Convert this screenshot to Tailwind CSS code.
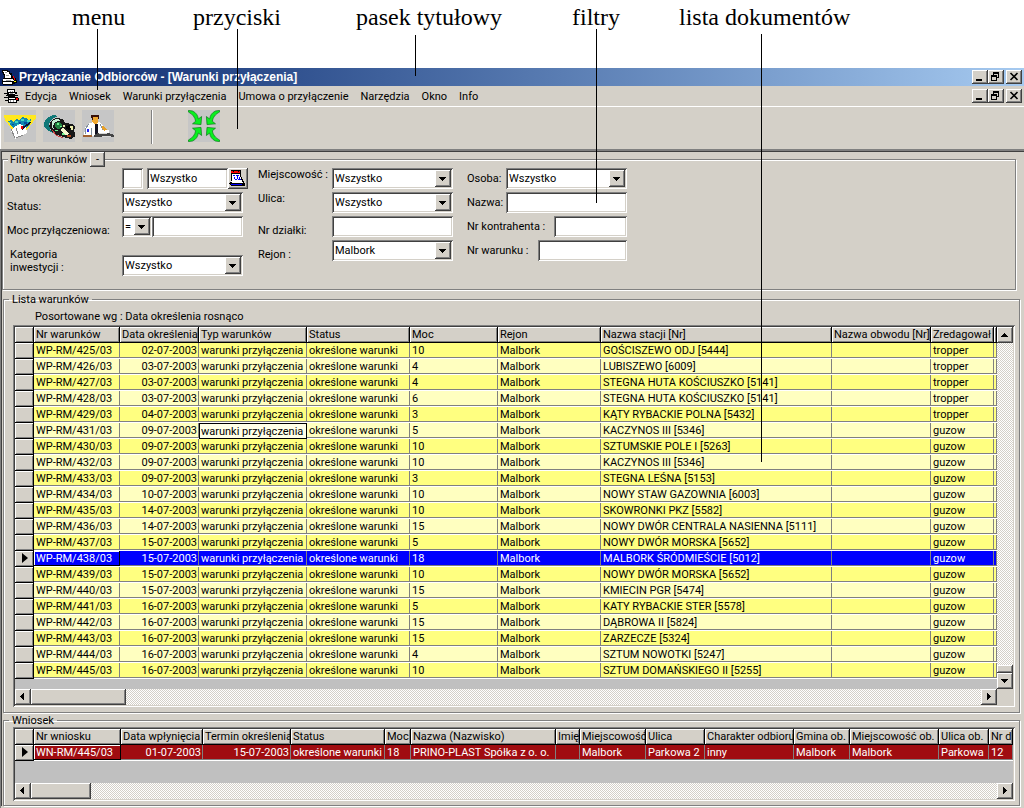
<!DOCTYPE html>
<html lang="pl">

<head>
  <meta charset="UTF-8">
  <title>Przyłączanie Odbiorców - [Warunki przyłączenia]</title>
  <script src="https://cdn.jsdelivr.net/npm/@tailwindcss/browser@4"></script>
</head>

<body class="bg-[#d4d0c8] font-[Roboto,'Liberation_Sans',Arial,sans-serif] text-[11px] leading-[13px] text-black overflow-x-hidden">

  <!-- opisy ekranu -->
  <header class="relative z-10 flex h-[68px] items-start bg-white pt-1 pl-[72px] font-['Liberation_Serif',serif] text-2xl leading-[26px] whitespace-nowrap">
    <p class="relative w-[121px]">menu<i class="absolute left-[25px] top-[25px] h-[61px] w-px bg-black"></i></p>
    <p class="relative w-[163px]">przyciski<i class="absolute left-[44px] top-[25px] h-[100px] w-px bg-black"></i></p>
    <p class="relative w-[216px]">pasek tytułowy<i class="absolute left-[59px] top-[31px] h-[41px] w-px bg-black"></i></p>
    <p class="relative w-[107px]">filtry<i class="absolute left-[24px] top-[25px] h-[174px] w-px bg-black"></i></p>
    <p class="relative">lista dokumentów<i class="absolute left-[82px] top-[30px] h-[428px] w-px bg-black"></i></p>
  </header>

  <!-- pasek tytułowy -->
  <div class="flex h-[18px] items-center bg-linear-to-r from-[#0a246a] to-[#a6caf0] pl-px pr-0.5">
    <svg class="size-4" viewBox="0 0 16 16" shape-rendering="crispEdges">
      <path d="M1 1h6v1h2v2h2v3h2v2h2v2h1v3h-2v1h-2v1H2v-1H1v-4h1v-2h1V6H2V4H1z" fill="#000" />
      <path d="M2 2h4v1h2v2H3V3H2zM4 5h5v1h1v3H4zM2 10h10v1h1v1H2zM2 13h9v2H2z" fill="#fff" />
      <path d="M4 3h2v1H4zM5 6h3v1H5zM5 11h5v1H5z" fill="#a0a0a0" />
      <path d="M12 7h1v2h-1zM13 9h1v2h-1z" fill="#f00" />
      <path d="M13 12h2v1h-2z" fill="#ff0" />
    </svg>
    <h1 class="ml-0.5 flex-1 font-['Liberation_Sans',Arial,sans-serif] text-xs font-bold text-white">Przyłączanie Odbiorców - [Warunki przyłączenia]</h1>
    <div class="flex">
      <button aria-label="Minimalizuj" class="h-3.5 w-4 bg-[#d4d0c8] shadow-[inset_-1px_-1px_#404040,inset_1px_1px_#fff,inset_-2px_-2px_#808080]">
        <svg class="h-3.5 w-4" viewBox="0 0 16 14"><path d="M4 9h6v2H4z" /></svg>
      </button>
      <button aria-label="Przywróć" class="h-3.5 w-4 bg-[#d4d0c8] shadow-[inset_-1px_-1px_#404040,inset_1px_1px_#fff,inset_-2px_-2px_#808080]">
        <svg class="h-3.5 w-4" viewBox="0 0 16 14" shape-rendering="crispEdges"><path fill-rule="evenodd" d="M5 2h6v6H9v3H3V5h2zM6 4v1h3v2h1V4zM4 7v3h4V7z" /></svg>
      </button>
      <button aria-label="Zamknij" class="ml-0.5 h-3.5 w-4 bg-[#d4d0c8] shadow-[inset_-1px_-1px_#404040,inset_1px_1px_#fff,inset_-2px_-2px_#808080]">
        <svg class="h-3.5 w-4" viewBox="0 0 16 14"><path d="M4.500 3l7 7M11.500 3l-7 7" stroke="#000" stroke-width="1.600" /></svg>
      </button>
    </div>
  </div>

  <!-- menu -->
  <div class="flex h-5 items-center pl-1 pr-0.5">
    <svg class="size-4" viewBox="0 0 16 16" shape-rendering="crispEdges">
      <path d="M3 1h8v3h2v2h-2v1h3v1h-3v1h3v1h1v3h-2v2H4v-2H1v-1h3v-2H0V9h4V8H2V7h1V6H0V5h3z" fill="#000" />
      <path d="M4 2h6v2H4zM5 5h6v1H5zM5 10h6v1H5zM5 12h7v2H5z" fill="#fff" />
      <path d="M6 3h1v1H6zM8 3h1v1H8zM6 12h1v2H6zM9 12h1v2H9zM6 5h3v1H6z" fill="#909090" />
      <path d="M12 10h2v2h-2z" fill="#f00" />
    </svg>
    <nav class="ml-[5px] flex flex-1 gap-3">
      <button>Edycja</button>
      <button>Wniosek</button>
      <button>Warunki przyłączenia</button>
      <button>Umowa o przyłączenie</button>
      <button>Narzędzia</button>
      <button>Okno</button>
      <button>Info</button>
    </nav>
    <div class="flex">
      <button aria-label="Minimalizuj okno" class="h-3.5 w-4 shadow-[inset_-1px_-1px_#404040,inset_1px_1px_#fff,inset_-2px_-2px_#808080]">
        <svg class="h-3.5 w-4" viewBox="0 0 16 14"><path d="M4 9h6v2H4z" /></svg>
      </button>
      <button aria-label="Przywróć okno" class="h-3.5 w-4 shadow-[inset_-1px_-1px_#404040,inset_1px_1px_#fff,inset_-2px_-2px_#808080]">
        <svg class="h-3.5 w-4" viewBox="0 0 16 14" shape-rendering="crispEdges"><path fill-rule="evenodd" d="M5 2h6v6H9v3H3V5h2zM6 4v1h3v2h1V4zM4 7v3h4V7z" /></svg>
      </button>
      <button aria-label="Zamknij okno" class="ml-0.5 h-3.5 w-4 shadow-[inset_-1px_-1px_#404040,inset_1px_1px_#fff,inset_-2px_-2px_#808080]">
        <svg class="h-3.5 w-4" viewBox="0 0 16 14"><path d="M4.500 3l7 7M11.500 3l-7 7" stroke="#000" stroke-width="1.600" /></svg>
      </button>
    </div>
  </div>

  <!-- przyciski -->
  <div class="flex h-[43px] items-start border-t border-l border-white pl-[3px] pt-[3px]">
    <button aria-label="Wnioski" class="size-8 bg-[#c6c6c6]">
      <svg class="size-8" viewBox="0 0 32 32" shape-rendering="crispEdges">
        <path d="M0 5h32v3L19 25h-7L1 10z" fill="#ffe820" />
        <path d="M4 11l3-1 2 2 3-3 4 1 2-3 4 1 2 2 3-1-1 5-6 7H11z" fill="#1088b0" />
        <path d="M5 12h2v1H5zM11 11h3v2h-3zM17 9h3v2h-3zM23 10h3v2h-3zM13 14h2v1h-2z" fill="#40d8c0" />
        <path d="M8 14h2v1H8zM15 12h2v2h-2zM20 12h3v2h-3z" fill="#0050a0" />
        <path d="M10 17l6-3 6 3 1 6-5 3-7 3-4-8z" fill="#fff" />
        <path d="M7 19l4 9M12 28l7-3M12 18l2 6" fill="none" stroke="#888" />
        <path d="M17 18l9-6 1 1-9 7z" fill="#101030" />
        <path d="M17 16h2v3h-2z" fill="#e00" />
      </svg>
    </button>
    <button aria-label="Warunki" class="ml-[7px] size-8 bg-[#c6c6c6]">
      <svg class="size-8" viewBox="0 0 32 32" shape-rendering="crispEdges">
        <path d="M1 13l3-5 6-3 5 1-6 3-3 5 1 5 3 4-6-3-3-4z" fill="#107878" />
        <path d="M9 22l-3-6 2-5 5-3 7 1 2 4 7 1 3 3-1 4 2 5-5 3-8-2-8-3z" fill="#181818" />
        <path d="M9 11l4-2 5 1-3 1-4 2-1 4 3 5-4-4z" fill="#c8f0d8" />
        <path d="M12 13l4-1 3 3-1 3-3 1-3-2z" fill="#208040" />
        <path d="M14 13h2v2h-2zM17 16h2v1h-2zM19 23h4v2h-4zM12 20h3v1h-3z" fill="#70f090" />
        <path d="M17 20l3-2 4 3 2 3-3 1z" fill="#f8f8d0" />
        <path d="M23 16l4-1 1 4-2 1-3-1z" fill="#000" />
        <path d="M27 16h3v4h-2zM20 15h2v2h-2z" fill="#f0f0b0" />
        <path d="M9 20l4 5 7 3" fill="none" stroke="#d04040" />
        <path d="M24 25h4v2h-4z" fill="#b04820" />
      </svg>
    </button>
    <button aria-label="Klienci" class="ml-[7px] size-8 bg-[#c6c6c6]">
      <svg class="size-8" viewBox="0 0 32 32" shape-rendering="crispEdges">
        <path d="M2 26l1-8 3-4 5-2h6l4 3 2 4 1 7z" fill="#fff" />
        <path d="M3 24l1-6 3-4M9 25v-7M18 14l3 6" fill="none" stroke="#8090a0" />
        <path d="M10 7h6v5l-3 3-3-3z" fill="#f0a830" />
        <path d="M9 5h8v4h-1V7h-5v3h-1z" fill="#381008" />
        <path d="M13 14h3v10h-3z" fill="#101020" />
        <path d="M5 19h2v3H5z" fill="#2020f0" />
        <path d="M20 16l3 1 2 3-3 1-2-2z" fill="#e8a028" />
        <path d="M23 20h4v4h-4z" fill="#fff" />
        <path d="M12 25l4-2h11l5 2v2H12z" fill="#444" />
        <path d="M17 23h8v1h-8zM20 26h9v1h-9z" fill="#d8d8d8" />
        <path d="M1 25h9v2H1z" fill="#a06030" />
      </svg>
    </button>
    <i class="ml-[37px] h-[34px] w-0.5 border-l border-[#808080] bg-white"></i>
    <button aria-label="Zamknij" class="ml-[35px] size-8 bg-[#c6c6c6]">
      <svg class="size-8" viewBox="0 0 32 32">
        <g id="strzalka">
          <path d="M.4.4L4.500 1C8 2.500 10 5.500 10.300 9L13.600 6.500 13 14.600 4.500 13.800 7.600 11.300C7.200 7.500 4.500 4 .4 2z" fill="#08f020" stroke="#087818" stroke-width=".7" />
        </g>
        <use href="#strzalka" transform="matrix(-1 0 0 1 32 0)" />
        <use href="#strzalka" transform="matrix(1 0 0 -1 0 32)" />
        <use href="#strzalka" transform="matrix(-1 0 0 -1 32 32)" />
      </svg>
    </button>
  </div>

  <main class="border-t-2 border-l border-[#808080] pb-0.5">
    <div class="border-t border-l border-[#404040]">

      <fieldset class="mr-2 rounded-none border border-[#808080] pl-1 pb-[13px] shadow-[inset_1px_1px_#fff,1px_1px_#fff]">
        <legend class="ml-[1px] flex h-[15px] items-center gap-[3px] bg-[#d4d0c8] pl-0.5">Filtry warunków
          <button class="h-[15px] w-[15px] shadow-[inset_-1px_-1px_#404040,inset_1px_1px_#fff,inset_-2px_-2px_#808080]">-</button>
        </legend>
        <div class="flex items-start pt-px">

          <div class="flex w-[251px] flex-col gap-[3px]">
            <div class="flex h-[21px] items-center">
              <label for="data" class="w-[115px]">Data określenia:</label>
              <input aria-label="Operator daty" class="h-[21px] w-[21px] bg-white px-1 shadow-[inset_1px_1px_#808080,inset_-1px_-1px_#fff,inset_2px_2px_#404040,inset_-2px_-2px_#d4d0c8]">
              <input id="data" value="Wszystko" class="ml-1 h-[21px] w-[81px] bg-white px-[3px] shadow-[inset_1px_1px_#808080,inset_-1px_-1px_#fff,inset_2px_2px_#404040,inset_-2px_-2px_#d4d0c8]">
              <button aria-label="Kalendarz" class="h-[21px] w-5 shadow-[inset_-1px_-1px_#404040,inset_1px_1px_#fff,inset_-2px_-2px_#808080]">
                <svg class="h-[21px] w-5" viewBox="0 0 20 21" shape-rendering="crispEdges">
                  <path d="M3 2h10v6l4 8v2H3l-2-3 2-2z" fill="#000" />
                  <path d="M3 3h9v2H3z" fill="#f00" />
                  <path d="M5 2h1v2H5zM10 2h1v2h-1z" fill="#000" />
                  <path d="M4 6h8v2l3 7H4l-1-2 1-1z" fill="#fff" />
                  <path d="M5 7h2v1H5zM8 7h3v1H8zM6 9h1v2H6zM9 8h1v3H9zM11 9h1v2h-1zM7 11h2v1H7zM10 11h3v1h-3zM3 16h11v1H3z" fill="#00f" />
                </svg>
              </button>
            </div>
            <div class="flex h-[21px] items-end">
              <label for="status" class="w-[115px]">Status:</label>
              <div class="relative h-[21px] w-[121px]">
                <select id="status" class="h-full w-full appearance-none bg-white px-[3px] shadow-[inset_1px_1px_#808080,inset_-1px_-1px_#fff,inset_2px_2px_#404040,inset_-2px_-2px_#d4d0c8]"><option>Wszystko</option></select>
                <svg class="pointer-events-none absolute right-0.5 top-0.5 h-[17px] w-4 bg-[#d4d0c8] shadow-[inset_-1px_-1px_#404040,inset_1px_1px_#fff,inset_-2px_-2px_#808080]" viewBox="0 0 16 17" shape-rendering="crispEdges"><path d="M4 7h7v1h-1v1H9v1H8v1H7v-1H6V9H5V8H4z" /></svg>
              </div>
            </div>
            <div class="flex h-[21px] items-end">
              <label for="moc" class="w-[115px]">Moc przyłączeniowa:</label>
              <div class="relative h-[21px] w-[30px]">
                <select aria-label="Operator mocy" class="h-full w-full appearance-none bg-white px-[3px] shadow-[inset_1px_1px_#808080,inset_-1px_-1px_#fff,inset_2px_2px_#404040,inset_-2px_-2px_#d4d0c8]"><option>=</option></select>
                <svg class="pointer-events-none absolute right-0.5 top-0.5 h-[17px] w-4 bg-[#d4d0c8] shadow-[inset_-1px_-1px_#404040,inset_1px_1px_#fff,inset_-2px_-2px_#808080]" viewBox="0 0 16 17" shape-rendering="crispEdges"><path d="M4 7h7v1h-1v1H9v1H8v1H7v-1H6V9H5V8H4z" /></svg>
              </div>
              <input id="moc" class="h-[21px] w-[91px] bg-white px-1 shadow-[inset_1px_1px_#808080,inset_-1px_-1px_#fff,inset_2px_2px_#404040,inset_-2px_-2px_#d4d0c8]">
            </div>
            <div class="mt-2 flex items-end">
              <label for="kategoria" class="w-[115px] pb-0.5 pl-[3px]">Kategoria<br>inwestycji :</label>
              <div class="relative h-[21px] w-[121px]">
                <select id="kategoria" class="h-full w-full appearance-none bg-white px-[3px] shadow-[inset_1px_1px_#808080,inset_-1px_-1px_#fff,inset_2px_2px_#404040,inset_-2px_-2px_#d4d0c8]"><option>Wszystko</option></select>
                <svg class="pointer-events-none absolute right-0.5 top-0.5 h-[17px] w-4 bg-[#d4d0c8] shadow-[inset_-1px_-1px_#404040,inset_1px_1px_#fff,inset_-2px_-2px_#808080]" viewBox="0 0 16 17" shape-rendering="crispEdges"><path d="M4 7h7v1h-1v1H9v1H8v1H7v-1H6V9H5V8H4z" /></svg>
              </div>
            </div>
          </div>

          <div class="flex w-[209px] flex-col gap-[3px]">
            <div class="flex h-[21px] items-start">
              <label for="miejscowosc" class="w-[74px]">Miejscowość :</label>
              <div class="relative h-[21px] w-[121px]">
                <select id="miejscowosc" class="h-full w-full appearance-none bg-white px-[3px] shadow-[inset_1px_1px_#808080,inset_-1px_-1px_#fff,inset_2px_2px_#404040,inset_-2px_-2px_#d4d0c8]"><option>Wszystko</option></select>
                <svg class="pointer-events-none absolute right-0.5 top-0.5 h-[17px] w-4 bg-[#d4d0c8] shadow-[inset_-1px_-1px_#404040,inset_1px_1px_#fff,inset_-2px_-2px_#808080]" viewBox="0 0 16 17" shape-rendering="crispEdges"><path d="M4 7h7v1h-1v1H9v1H8v1H7v-1H6V9H5V8H4z" /></svg>
              </div>
            </div>
            <div class="flex h-[21px] items-start">
              <label for="ulica" class="w-[74px]">Ulica:</label>
              <div class="relative h-[21px] w-[121px]">
                <select id="ulica" class="h-full w-full appearance-none bg-white px-[3px] shadow-[inset_1px_1px_#808080,inset_-1px_-1px_#fff,inset_2px_2px_#404040,inset_-2px_-2px_#d4d0c8]"><option>Wszystko</option></select>
                <svg class="pointer-events-none absolute right-0.5 top-0.5 h-[17px] w-4 bg-[#d4d0c8] shadow-[inset_-1px_-1px_#404040,inset_1px_1px_#fff,inset_-2px_-2px_#808080]" viewBox="0 0 16 17" shape-rendering="crispEdges"><path d="M4 7h7v1h-1v1H9v1H8v1H7v-1H6V9H5V8H4z" /></svg>
              </div>
            </div>
            <div class="flex h-[21px] items-end">
              <label for="dzialka" class="w-[74px]">Nr działki:</label>
              <input id="dzialka" class="h-[21px] w-[121px] bg-white px-1 shadow-[inset_1px_1px_#808080,inset_-1px_-1px_#fff,inset_2px_2px_#404040,inset_-2px_-2px_#d4d0c8]">
            </div>
            <div class="flex h-[21px] items-end">
              <label for="rejon" class="w-[74px]">Rejon :</label>
              <div class="relative h-[21px] w-[121px]">
                <select id="rejon" class="h-full w-full appearance-none bg-white px-[3px] shadow-[inset_1px_1px_#808080,inset_-1px_-1px_#fff,inset_2px_2px_#404040,inset_-2px_-2px_#d4d0c8]"><option>Malbork</option></select>
                <svg class="pointer-events-none absolute right-0.5 top-0.5 h-[17px] w-4 bg-[#d4d0c8] shadow-[inset_-1px_-1px_#404040,inset_1px_1px_#fff,inset_-2px_-2px_#808080]" viewBox="0 0 16 17" shape-rendering="crispEdges"><path d="M4 7h7v1h-1v1H9v1H8v1H7v-1H6V9H5V8H4z" /></svg>
              </div>
            </div>
          </div>

          <div class="flex w-40 flex-col gap-[3px]">
            <div class="flex h-[21px] items-center justify-between">
              <label for="osoba">Osoba:</label>
              <div class="relative h-[21px] w-[121px]">
                <select id="osoba" class="h-full w-full appearance-none bg-white px-[3px] shadow-[inset_1px_1px_#808080,inset_-1px_-1px_#fff,inset_2px_2px_#404040,inset_-2px_-2px_#d4d0c8]"><option>Wszystko</option></select>
                <svg class="pointer-events-none absolute right-0.5 top-0.5 h-[17px] w-4 bg-[#d4d0c8] shadow-[inset_-1px_-1px_#404040,inset_1px_1px_#fff,inset_-2px_-2px_#808080]" viewBox="0 0 16 17" shape-rendering="crispEdges"><path d="M4 7h7v1h-1v1H9v1H8v1H7v-1H6V9H5V8H4z" /></svg>
              </div>
            </div>
            <div class="flex h-[21px] items-center justify-between">
              <label for="nazwa">Nazwa:</label>
              <input id="nazwa" class="h-[21px] w-[121px] bg-white px-1 shadow-[inset_1px_1px_#808080,inset_-1px_-1px_#fff,inset_2px_2px_#404040,inset_-2px_-2px_#d4d0c8]">
            </div>
            <div class="flex h-[21px] items-center justify-between">
              <label for="kontrahent">Nr kontrahenta :</label>
              <input id="kontrahent" class="h-[21px] w-[73px] bg-white px-1 shadow-[inset_1px_1px_#808080,inset_-1px_-1px_#fff,inset_2px_2px_#404040,inset_-2px_-2px_#d4d0c8]">
            </div>
            <div class="flex h-[21px] items-center justify-between">
              <label for="warunek">Nr warunku :</label>
              <input id="warunek" class="h-[21px] w-[89px] bg-white px-1 shadow-[inset_1px_1px_#808080,inset_-1px_-1px_#fff,inset_2px_2px_#404040,inset_-2px_-2px_#d4d0c8]">
            </div>
          </div>
        </div>
      </fieldset>

      <fieldset class="mt-[3px] mr-1 ml-px border border-[#808080] pr-1 pb-[5px] pl-[9px] shadow-[inset_1px_1px_#fff,1px_1px_#fff]">
        <legend class="-ml-1 h-[13px] px-[3px]">Lista warunków</legend>
        <p class="mt-1 mb-0.5 pl-[22px]">Posortowane wg : Data określenia rosnąco</p>
        <div class="flex bg-[#c0c0c0] p-0.5 shadow-[inset_1px_1px_#808080,inset_-1px_-1px_#fff,inset_2px_2px_#404040,inset_-2px_-2px_#d4d0c8]">
          <div class="min-w-0 flex-1">
            <table class="w-full table-fixed border-separate border-spacing-0 whitespace-nowrap">
              <colgroup>
                <col class="w-[19px]"><col class="w-[86px]"><col class="w-[79px]"><col class="w-[108px]"><col class="w-[103px]"><col class="w-[88px]"><col class="w-[103px]"><col class="w-[231px]"><col class="w-[99px]"><col class="w-[63px]"><col>
              </colgroup>
              <thead>
                <tr id="lista-head"></tr>
              </thead>
              <tbody id="lista-body"></tbody>
            </table>
            <div class="h-2.5"></div>
            <div class="flex h-4 bg-[repeating-conic-gradient(#fff_0_25%,#d4d0c8_0_50%)] bg-[length:2px_2px]">
              <button aria-label="W lewo" class="h-4 w-4 bg-[#d4d0c8] shadow-[inset_-1px_-1px_#404040,inset_1px_1px_#fff,inset_-2px_-2px_#808080]">
                <svg class="size-4" viewBox="0 0 16 16" shape-rendering="crispEdges"><path d="M5 7h1V6h1V5h1V4h1v7H8v-1H7V9H6V8H5z" /></svg>
              </button>
              <div class="h-4 w-[95px] bg-[#d4d0c8] shadow-[inset_-1px_-1px_#404040,inset_1px_1px_#fff,inset_-2px_-2px_#808080]"></div>
              <button aria-label="W prawo" class="ml-auto h-4 w-4 bg-[#d4d0c8] shadow-[inset_-1px_-1px_#404040,inset_1px_1px_#fff,inset_-2px_-2px_#808080]">
                <svg class="size-4" viewBox="0 0 16 16" shape-rendering="crispEdges"><path d="M6 4h1v1h1v1h1v1h1v1H9v1H8v1H7v1H6z" /></svg>
              </button>
            </div>
          </div>
          <div class="flex w-4 flex-col bg-[repeating-conic-gradient(#fff_0_25%,#d4d0c8_0_50%)] bg-[length:2px_2px]">
            <button aria-label="W górę" class="h-4 w-4 bg-[#d4d0c8] shadow-[inset_-1px_-1px_#404040,inset_1px_1px_#fff,inset_-2px_-2px_#808080]">
              <svg class="size-4" viewBox="0 0 16 16" shape-rendering="crispEdges"><path d="M7 6h1v1h1v1h1v1h1v1H4V9h1V8h1V7h1z" /></svg>
            </button>
            <div class="mt-auto h-2 w-4 bg-[#d4d0c8] shadow-[inset_-1px_-1px_#404040,inset_1px_1px_#fff,inset_-2px_-2px_#808080]"></div>
            <button aria-label="W dół" class="h-4 w-4 bg-[#d4d0c8] shadow-[inset_-1px_-1px_#404040,inset_1px_1px_#fff,inset_-2px_-2px_#808080]">
              <svg class="size-4" viewBox="0 0 16 16" shape-rendering="crispEdges"><path d="M4 6h7v1h-1v1H9v1H8v1H7V9H6V8H5V7H4z" /></svg>
            </button>
            <div class="h-4 w-4 bg-[#d4d0c8]"></div>
          </div>
        </div>
      </fieldset>

      <fieldset class="mt-px mr-1 ml-px border border-[#808080] pr-1 pb-1 pl-[9px] shadow-[inset_1px_1px_#fff,1px_1px_#fff]">
        <legend class="-ml-1 h-[13px] px-[3px]">Wniosek</legend>
        <div class="bg-[#c0c0c0] p-0.5 shadow-[inset_1px_1px_#808080,inset_-1px_-1px_#fff,inset_2px_2px_#404040,inset_-2px_-2px_#d4d0c8]">
          <table class="w-full table-fixed border-separate border-spacing-0 whitespace-nowrap">
            <colgroup>
              <col class="w-[19px]"><col class="w-[87px]"><col class="w-[82px]"><col class="w-[88px]"><col class="w-[94px]"><col class="w-[26px]"><col class="w-[145px]"><col class="w-[24px]"><col class="w-[66px]"><col class="w-[59px]"><col class="w-[89px]"><col class="w-[56px]"><col class="w-[89px]"><col class="w-[50px]"><col>
            </colgroup>
            <thead>
              <tr id="wniosek-head"></tr>
            </thead>
            <tbody id="wniosek-body"></tbody>
          </table>
          <div class="h-[22px]"></div>
          <div class="flex h-4 bg-[repeating-conic-gradient(#fff_0_25%,#d4d0c8_0_50%)] bg-[length:2px_2px]">
            <button aria-label="W lewo" class="h-4 w-4 bg-[#d4d0c8] shadow-[inset_-1px_-1px_#404040,inset_1px_1px_#fff,inset_-2px_-2px_#808080]">
              <svg class="size-4" viewBox="0 0 16 16" shape-rendering="crispEdges"><path d="M5 7h1V6h1V5h1V4h1v7H8v-1H7V9H6V8H5z" /></svg>
            </button>
            <div class="h-4 w-[60px] bg-[#d4d0c8] shadow-[inset_-1px_-1px_#404040,inset_1px_1px_#fff,inset_-2px_-2px_#808080]"></div>
            <button aria-label="W prawo" class="ml-auto h-4 w-4 bg-[#d4d0c8] shadow-[inset_-1px_-1px_#404040,inset_1px_1px_#fff,inset_-2px_-2px_#808080]">
              <svg class="size-4" viewBox="0 0 16 16" shape-rendering="crispEdges"><path d="M6 4h1v1h1v1h1v1h1v1H9v1H8v1H7v1H6z" /></svg>
            </button>
          </div>
        </div>
      </fieldset>
    </div>
  </main>

  <script>
    const HEAD = 'h-4 overflow-hidden bg-[#d4d0c8] p-0 pl-0.5 text-left align-middle font-normal leading-4 shadow-[inset_-1px_-1px_#000,inset_1px_1px_#fff,inset_-2px_-2px_#808080]'
    const CELL = 'h-4 overflow-hidden p-0 pl-0.5 text-left leading-4 shadow-[inset_0_-1px_#fff,inset_0_-2px_#808080,inset_-1px_0_#808080]'
    const CELL_RIGHT = 'h-4 overflow-hidden p-0 pr-0.5 text-right leading-4 shadow-[inset_0_-1px_#fff,inset_0_-2px_#808080,inset_-1px_0_#808080]'
    const CELL_FOCUS = 'h-4 overflow-hidden p-0 pl-0.5 text-left leading-4 shadow-[inset_0_-1px_#fff,inset_-1px_-2px_#000,inset_1px_1px_#fff]'
    const MARK = 'h-4 bg-[#d4d0c8] p-0 align-top shadow-[inset_-1px_-1px_#000,inset_1px_1px_#fff,inset_-2px_-2px_#808080]'
    const ARROW = '<svg class="ml-[7px] block h-3.5 w-2" viewBox="0 0 8 14"><path d="M0 2l6 5-6 5z"/></svg>'

    const typ = 'warunki przyłączenia'
    const lista = [
      ['425', '02-07-2003', '10', 'GOŚCISZEWO ODJ [5444]', 'tropper'],
      ['426', '03-07-2003', '4', 'LUBISZEWO [6009]', 'tropper'],
      ['427', '03-07-2003', '4', 'STEGNA HUTA KOŚCIUSZKO [5141]', 'tropper'],
      ['428', '03-07-2003', '6', 'STEGNA HUTA KOŚCIUSZKO [5141]', 'tropper'],
      ['429', '04-07-2003', '3', 'KĄTY RYBACKIE POLNA [5432]', 'tropper'],
      ['431', '09-07-2003', '5', 'KACZYNOS III [5346]', 'guzow'],
      ['430', '09-07-2003', '10', 'SZTUMSKIE POLE I [5263]', 'guzow'],
      ['432', '09-07-2003', '10', 'KACZYNOS III [5346]', 'guzow'],
      ['433', '09-07-2003', '3', 'STEGNA LEŚNA [5153]', 'guzow'],
      ['434', '10-07-2003', '10', 'NOWY STAW GAZOWNIA [6003]', 'guzow'],
      ['435', '14-07-2003', '10', 'SKOWRONKI PKZ [5582]', 'guzow'],
      ['436', '14-07-2003', '15', 'NOWY DWÓR CENTRALA NASIENNA [5111]', 'guzow'],
      ['437', '15-07-2003', '5', 'NOWY DWÓR MORSKA [5652]', 'guzow'],
      ['438', '15-07-2003', '18', 'MALBORK ŚRÓDMIEŚCIE [5012]', 'guzow'],
      ['439', '15-07-2003', '10', 'NOWY DWÓR MORSKA [5652]', 'guzow'],
      ['440', '15-07-2003', '15', 'KMIECIN PGR [5474]', 'guzow'],
      ['441', '16-07-2003', '5', 'KATY RYBACKIE STER [5578]', 'guzow'],
      ['442', '16-07-2003', '15', 'DĄBROWA II [5824]', 'guzow'],
      ['443', '16-07-2003', '15', 'ZARZECZE [5324]', 'guzow'],
      ['444', '16-07-2003', '4', 'SZTUM NOWOTKI [5247]', 'guzow'],
      ['445', '16-07-2003', '10', 'SZTUM DOMAŃSKIEGO II [5255]', 'guzow']
    ]
    const wniosek = ['WN-RM/445/03', '01-07-2003', '15-07-2003', 'określone warunki', '18', 'PRINO-PLAST Spółka z o. o.', '', 'Malbork', 'Parkowa 2', 'inny', 'Malbork', 'Malbork', 'Parkowa', '12']

    const head = (names) => names.map((it) => `<th class="${HEAD}">${it}</th>`).join('')

    document.getElementById('lista-head').innerHTML = head(['', 'Nr warunków', 'Data określenia', 'Typ warunków', 'Status', 'Moc', 'Rejon', 'Nazwa stacji [Nr]', 'Nazwa obwodu [Nr]', 'Zredagował', ''])
    document.getElementById('wniosek-head').innerHTML = head(['', 'Nr wniosku', 'Data wpłynięcia', 'Termin określenia', 'Status', 'Moc', 'Nazwa (Nazwisko)', 'Imię', 'Miejscowość', 'Ulica', 'Charakter odbioru', 'Gmina ob.', 'Miejscowość ob.', 'Ulica ob.', 'Nr d'])

    document.getElementById('lista-body').innerHTML = lista.map(([nr, data, moc, stacja, kto], i) => {
      const selected = nr === '438'
      const color = selected ? 'bg-[#0000ff] text-white' : i % 2 ? 'bg-[#ffffc0]' : 'bg-[#ffff80]'
      // komórka w trybie edycji
      const typCell = nr === '431'
        ? `<td class="h-4 p-0 align-top"><input aria-label="Typ warunków" value="${typ}" class="block h-4 w-full border border-black bg-[#ffffe8] pl-px"></td>`
        : `<td class="${CELL}">${typ}</td>`
      return `<tr class="${color}">
        <td class="${MARK}">${selected ? ARROW : ''}</td>
        <td class="${selected ? CELL_FOCUS : CELL}">WP-RM/${nr}/03</td>
        <td class="${CELL_RIGHT}">${data}</td>
        ${typCell}
        <td class="${CELL}">określone warunki</td>
        <td class="${CELL}">${moc}</td>
        <td class="${CELL}">Malbork</td>
        <td class="${CELL}">${stacja}</td>
        <td class="${CELL}"></td>
        <td class="${CELL}">${kto}</td>
        <td class="${CELL}"></td>
      </tr>`
    }).join('')

    document.getElementById('wniosek-body').innerHTML = `<tr class="bg-[#a00c10] text-white"><td class="${MARK}">${ARROW}</td>` +
      wniosek.map((it, i) => `<td class="${i === 0 ? CELL_FOCUS : i < 3 ? CELL_RIGHT : CELL}">${it}</td>`).join('') + '</tr>'
  </script>
</body>

</html>
